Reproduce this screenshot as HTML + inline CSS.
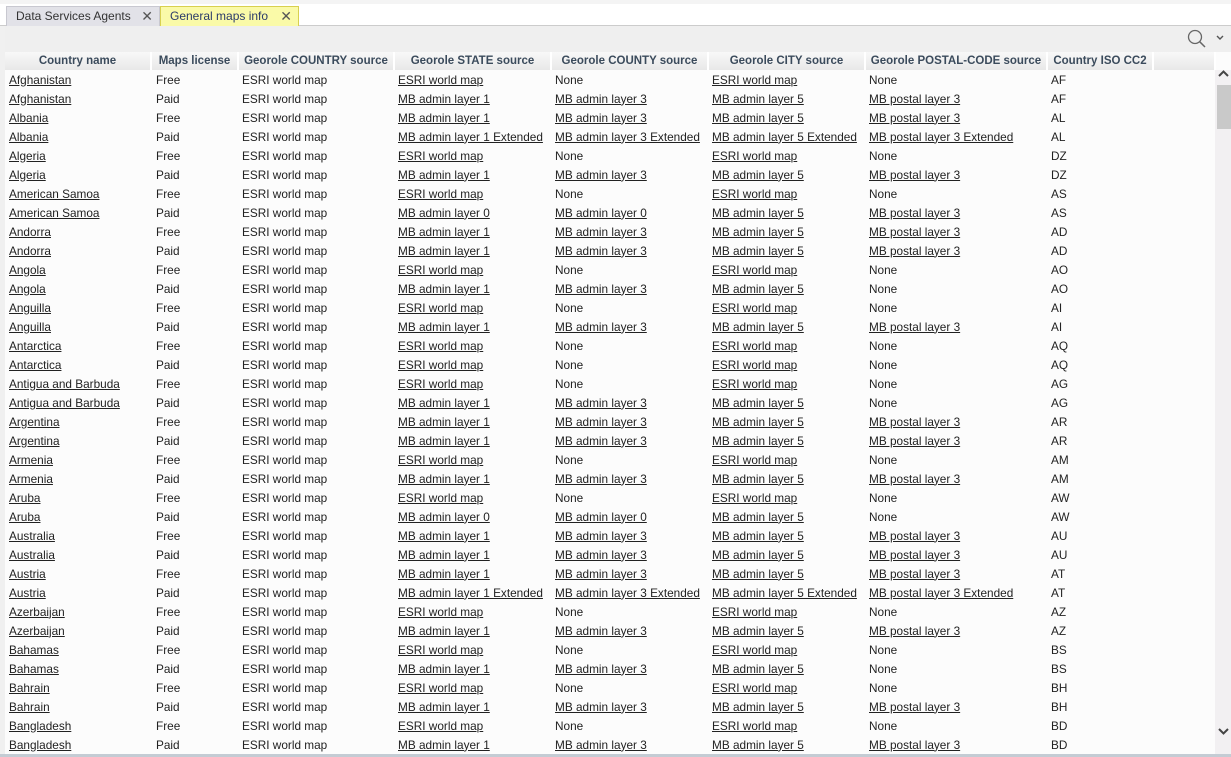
<!DOCTYPE html>
<html><head><meta charset="utf-8"><style>
*{margin:0;padding:0;box-sizing:border-box}
body{width:1231px;height:757px;overflow:hidden;background:#f0f0f0;font-family:"Liberation Sans",sans-serif;font-size:11.8px;color:#222;position:relative}
.topbar{position:absolute;left:0;top:0;width:1231px;height:6px;background:#f4f4f4}
.tabs{position:absolute;left:0;top:4px;width:1231px;height:22px;background:#fff;border-bottom:1px solid #ccc}
.tab{position:absolute;top:2px;height:20px;line-height:19px;padding-left:9px;font-size:12px;color:#333}
.t1{left:6px;width:154px;background:#e2e2e8;border:1px solid #c8c8d0;border-bottom:none}
.t2{left:160px;width:139px;background:#fafaa8;border:1px solid #d8d050;border-bottom:none;color:#2a3a6a}
.x{position:absolute;right:6px;top:0;font-size:14px;color:#555}
.tool{position:absolute;left:5px;top:26px;width:1226px;height:26px;background:#efefef}
.grid{position:absolute;left:5px;top:52px;width:1226px;height:703px;background:#fcfcfc}
table{border-collapse:collapse;table-layout:fixed;width:1210px}
th{height:18px;background:linear-gradient(#f8f8f8,#e8e8e8);color:#3b4b5c;font-weight:bold;font-size:11.5px;border-right:2px solid #fff;text-align:center;white-space:nowrap;overflow:hidden}
td{height:19px;padding-left:4px;white-space:nowrap;overflow:hidden}
td:nth-child(2){padding-left:5px}
td u{text-decoration:underline}
.sb{position:absolute;left:1215px;top:70px;width:16px;height:685px;background:#f2f0f2}
.thumb{position:absolute;left:2px;top:15px;width:14px;height:44px;background:#c9c9c9}
.bottom{position:absolute;left:0;top:754px;width:1231px;height:3px;background:#c4ccd4}
</style></head><body>
<div class="topbar"></div>
<div class="tabs">
<div class="tab t1">Data Services Agents<span class="x">✕</span></div>
<div class="tab t2">General maps info<span class="x">✕</span></div>
</div>
<div class="tool">
<svg style="position:absolute;left:1182px;top:3px" width="20" height="20" viewBox="0 0 20 20"><circle cx="8" cy="8" r="6.5" fill="none" stroke="#666" stroke-width="1.3"/><line x1="12.8" y1="12.8" x2="18" y2="18" stroke="#666" stroke-width="1.5"/></svg>
<svg style="position:absolute;left:1211px;top:9px" width="8" height="6" viewBox="0 0 8 6"><path d="M1 1 L4 4 L7 1" fill="none" stroke="#555" stroke-width="1.4"/></svg>
</div>
<div class="grid">
<table>
<colgroup><col style="width:146px"><col style="width:87px"><col style="width:156px"><col style="width:157px"><col style="width:157px"><col style="width:157px"><col style="width:182px"><col style="width:106px"><col style="width:62px"></colgroup>
<tr><th>Country name</th><th>Maps license</th><th>Georole COUNTRY source</th><th>Georole STATE source</th><th>Georole COUNTY source</th><th>Georole CITY source</th><th>Georole POSTAL-CODE source</th><th>Country ISO CC2</th><th></th></tr>
<tr><td><u>Afghanistan</u></td><td>Free</td><td>ESRI world map</td><td><u>ESRI world map</u></td><td>None</td><td><u>ESRI world map</u></td><td>None</td><td>AF</td><td></td></tr>
<tr><td><u>Afghanistan</u></td><td>Paid</td><td>ESRI world map</td><td><u>MB admin layer 1</u></td><td><u>MB admin layer 3</u></td><td><u>MB admin layer 5</u></td><td><u>MB postal layer 3</u></td><td>AF</td><td></td></tr>
<tr><td><u>Albania</u></td><td>Free</td><td>ESRI world map</td><td><u>MB admin layer 1</u></td><td><u>MB admin layer 3</u></td><td><u>MB admin layer 5</u></td><td><u>MB postal layer 3</u></td><td>AL</td><td></td></tr>
<tr><td><u>Albania</u></td><td>Paid</td><td>ESRI world map</td><td><u>MB admin layer 1 Extended</u></td><td><u>MB admin layer 3 Extended</u></td><td><u>MB admin layer 5 Extended</u></td><td><u>MB postal layer 3 Extended</u></td><td>AL</td><td></td></tr>
<tr><td><u>Algeria</u></td><td>Free</td><td>ESRI world map</td><td><u>ESRI world map</u></td><td>None</td><td><u>ESRI world map</u></td><td>None</td><td>DZ</td><td></td></tr>
<tr><td><u>Algeria</u></td><td>Paid</td><td>ESRI world map</td><td><u>MB admin layer 1</u></td><td><u>MB admin layer 3</u></td><td><u>MB admin layer 5</u></td><td><u>MB postal layer 3</u></td><td>DZ</td><td></td></tr>
<tr><td><u>American Samoa</u></td><td>Free</td><td>ESRI world map</td><td><u>ESRI world map</u></td><td>None</td><td><u>ESRI world map</u></td><td>None</td><td>AS</td><td></td></tr>
<tr><td><u>American Samoa</u></td><td>Paid</td><td>ESRI world map</td><td><u>MB admin layer 0</u></td><td><u>MB admin layer 0</u></td><td><u>MB admin layer 5</u></td><td><u>MB postal layer 3</u></td><td>AS</td><td></td></tr>
<tr><td><u>Andorra</u></td><td>Free</td><td>ESRI world map</td><td><u>MB admin layer 1</u></td><td><u>MB admin layer 3</u></td><td><u>MB admin layer 5</u></td><td><u>MB postal layer 3</u></td><td>AD</td><td></td></tr>
<tr><td><u>Andorra</u></td><td>Paid</td><td>ESRI world map</td><td><u>MB admin layer 1</u></td><td><u>MB admin layer 3</u></td><td><u>MB admin layer 5</u></td><td><u>MB postal layer 3</u></td><td>AD</td><td></td></tr>
<tr><td><u>Angola</u></td><td>Free</td><td>ESRI world map</td><td><u>ESRI world map</u></td><td>None</td><td><u>ESRI world map</u></td><td>None</td><td>AO</td><td></td></tr>
<tr><td><u>Angola</u></td><td>Paid</td><td>ESRI world map</td><td><u>MB admin layer 1</u></td><td><u>MB admin layer 3</u></td><td><u>MB admin layer 5</u></td><td>None</td><td>AO</td><td></td></tr>
<tr><td><u>Anguilla</u></td><td>Free</td><td>ESRI world map</td><td><u>ESRI world map</u></td><td>None</td><td><u>ESRI world map</u></td><td>None</td><td>AI</td><td></td></tr>
<tr><td><u>Anguilla</u></td><td>Paid</td><td>ESRI world map</td><td><u>MB admin layer 1</u></td><td><u>MB admin layer 3</u></td><td><u>MB admin layer 5</u></td><td><u>MB postal layer 3</u></td><td>AI</td><td></td></tr>
<tr><td><u>Antarctica</u></td><td>Free</td><td>ESRI world map</td><td><u>ESRI world map</u></td><td>None</td><td><u>ESRI world map</u></td><td>None</td><td>AQ</td><td></td></tr>
<tr><td><u>Antarctica</u></td><td>Paid</td><td>ESRI world map</td><td><u>ESRI world map</u></td><td>None</td><td><u>ESRI world map</u></td><td>None</td><td>AQ</td><td></td></tr>
<tr><td><u>Antigua and Barbuda</u></td><td>Free</td><td>ESRI world map</td><td><u>ESRI world map</u></td><td>None</td><td><u>ESRI world map</u></td><td>None</td><td>AG</td><td></td></tr>
<tr><td><u>Antigua and Barbuda</u></td><td>Paid</td><td>ESRI world map</td><td><u>MB admin layer 1</u></td><td><u>MB admin layer 3</u></td><td><u>MB admin layer 5</u></td><td>None</td><td>AG</td><td></td></tr>
<tr><td><u>Argentina</u></td><td>Free</td><td>ESRI world map</td><td><u>MB admin layer 1</u></td><td><u>MB admin layer 3</u></td><td><u>MB admin layer 5</u></td><td><u>MB postal layer 3</u></td><td>AR</td><td></td></tr>
<tr><td><u>Argentina</u></td><td>Paid</td><td>ESRI world map</td><td><u>MB admin layer 1</u></td><td><u>MB admin layer 3</u></td><td><u>MB admin layer 5</u></td><td><u>MB postal layer 3</u></td><td>AR</td><td></td></tr>
<tr><td><u>Armenia</u></td><td>Free</td><td>ESRI world map</td><td><u>ESRI world map</u></td><td>None</td><td><u>ESRI world map</u></td><td>None</td><td>AM</td><td></td></tr>
<tr><td><u>Armenia</u></td><td>Paid</td><td>ESRI world map</td><td><u>MB admin layer 1</u></td><td><u>MB admin layer 3</u></td><td><u>MB admin layer 5</u></td><td><u>MB postal layer 3</u></td><td>AM</td><td></td></tr>
<tr><td><u>Aruba</u></td><td>Free</td><td>ESRI world map</td><td><u>ESRI world map</u></td><td>None</td><td><u>ESRI world map</u></td><td>None</td><td>AW</td><td></td></tr>
<tr><td><u>Aruba</u></td><td>Paid</td><td>ESRI world map</td><td><u>MB admin layer 0</u></td><td><u>MB admin layer 0</u></td><td><u>MB admin layer 5</u></td><td>None</td><td>AW</td><td></td></tr>
<tr><td><u>Australia</u></td><td>Free</td><td>ESRI world map</td><td><u>MB admin layer 1</u></td><td><u>MB admin layer 3</u></td><td><u>MB admin layer 5</u></td><td><u>MB postal layer 3</u></td><td>AU</td><td></td></tr>
<tr><td><u>Australia</u></td><td>Paid</td><td>ESRI world map</td><td><u>MB admin layer 1</u></td><td><u>MB admin layer 3</u></td><td><u>MB admin layer 5</u></td><td><u>MB postal layer 3</u></td><td>AU</td><td></td></tr>
<tr><td><u>Austria</u></td><td>Free</td><td>ESRI world map</td><td><u>MB admin layer 1</u></td><td><u>MB admin layer 3</u></td><td><u>MB admin layer 5</u></td><td><u>MB postal layer 3</u></td><td>AT</td><td></td></tr>
<tr><td><u>Austria</u></td><td>Paid</td><td>ESRI world map</td><td><u>MB admin layer 1 Extended</u></td><td><u>MB admin layer 3 Extended</u></td><td><u>MB admin layer 5 Extended</u></td><td><u>MB postal layer 3 Extended</u></td><td>AT</td><td></td></tr>
<tr><td><u>Azerbaijan</u></td><td>Free</td><td>ESRI world map</td><td><u>ESRI world map</u></td><td>None</td><td><u>ESRI world map</u></td><td>None</td><td>AZ</td><td></td></tr>
<tr><td><u>Azerbaijan</u></td><td>Paid</td><td>ESRI world map</td><td><u>MB admin layer 1</u></td><td><u>MB admin layer 3</u></td><td><u>MB admin layer 5</u></td><td><u>MB postal layer 3</u></td><td>AZ</td><td></td></tr>
<tr><td><u>Bahamas</u></td><td>Free</td><td>ESRI world map</td><td><u>ESRI world map</u></td><td>None</td><td><u>ESRI world map</u></td><td>None</td><td>BS</td><td></td></tr>
<tr><td><u>Bahamas</u></td><td>Paid</td><td>ESRI world map</td><td><u>MB admin layer 1</u></td><td><u>MB admin layer 3</u></td><td><u>MB admin layer 5</u></td><td>None</td><td>BS</td><td></td></tr>
<tr><td><u>Bahrain</u></td><td>Free</td><td>ESRI world map</td><td><u>ESRI world map</u></td><td>None</td><td><u>ESRI world map</u></td><td>None</td><td>BH</td><td></td></tr>
<tr><td><u>Bahrain</u></td><td>Paid</td><td>ESRI world map</td><td><u>MB admin layer 1</u></td><td><u>MB admin layer 3</u></td><td><u>MB admin layer 5</u></td><td><u>MB postal layer 3</u></td><td>BH</td><td></td></tr>
<tr><td><u>Bangladesh</u></td><td>Free</td><td>ESRI world map</td><td><u>ESRI world map</u></td><td>None</td><td><u>ESRI world map</u></td><td>None</td><td>BD</td><td></td></tr>
<tr><td><u>Bangladesh</u></td><td>Paid</td><td>ESRI world map</td><td><u>MB admin layer 1</u></td><td><u>MB admin layer 3</u></td><td><u>MB admin layer 5</u></td><td><u>MB postal layer 3</u></td><td>BD</td><td></td></tr>
</table>
</div>
<div class="sb"><div class="thumb"></div>
<svg style="position:absolute;left:3px;top:0px" width="11" height="8" viewBox="0 0 11 8"><path d="M1 6 L5.5 1.5 L10 6" fill="none" stroke="#444" stroke-width="2"/></svg>
<svg style="position:absolute;left:3px;top:657px" width="11" height="8" viewBox="0 0 11 8"><path d="M1 2 L5.5 6.5 L10 2" fill="none" stroke="#444" stroke-width="2"/></svg>
</div>
<div class="bottom"></div>
</body></html>
